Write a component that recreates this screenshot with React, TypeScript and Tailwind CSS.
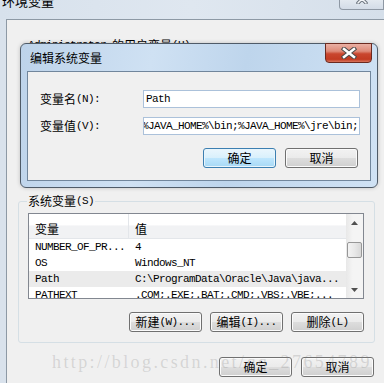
import React from "react";

const CJK = "font-['Noto_Sans_CJK_SC',sans-serif] text-[12px]";
const MONO = "font-['Liberation_Mono',monospace] text-[11px] tracking-[-0.6px]";

function Mix({ zh, en, pre }: { zh: string; en?: string; pre?: string }) {
  return (
    <span className="flex items-center whitespace-pre leading-[14px] text-black">
      {pre && <span className={MONO}>{pre}</span>}
      <span className={CJK}>{zh}</span>
      {en && <span className={MONO}>{en}</span>}
    </span>
  );
}

function Btn({ zh, en, focused }: { zh: string; en?: string; focused?: boolean }) {
  const base =
    "h-[20px] w-[73px] shrink-0 rounded-[3px] border flex items-center justify-center";
  const normal =
    "border-[#707070] bg-[linear-gradient(#f2f2f2_0%,#ebebeb_48%,#dddddd_52%,#cfcfcf_100%)] shadow-[inset_0_0_0_1px_#fbfbfb]";
  const focus =
    "border-[#3c7fb1] bg-[linear-gradient(#eaf6fd_0%,#d9f0fc_48%,#bee6fd_52%,#a7d9f5_100%)] shadow-[inset_0_0_0_1px_#e8f5fc]";
  return (
    <div className={`${base} ${focused ? focus : normal}`}>
      <Mix zh={zh} en={en} />
    </div>
  );
}

function Input({ children }: { children: React.ReactNode }) {
  return (
    <div className="h-[18px] w-[217px] border border-[#abc1da] bg-white overflow-hidden flex items-center pl-[2px]">
      <span className={`${MONO} leading-[14px] whitespace-nowrap text-black`}>{children}</span>
    </div>
  );
}

function Tri({ down }: { down?: boolean }) {
  return (
    <svg width="7" height="4" viewBox="0 0 7 4" className="block">
      <polygon points={down ? "0,0 7,0 3.5,4" : "0,4 3.5,0 7,4"} fill="#505050" />
    </svg>
  );
}

const rows: { name: string; value: string; sel?: boolean }[] = [
  { name: "NUMBER_OF_PR...", value: "4" },
  { name: "OS", value: "Windows_NT" },
  { name: "Path", value: "C:\\ProgramData\\Oracle\\Java\\java...", sel: true },
  { name: "PATHEXT", value: ".COM;.EXE;.BAT;.CMD;.VBS;.VBE;..." },
];

export default function App() {
  return (
    <div className="relative w-[384px] h-[383px] overflow-hidden bg-[#d9e2ec] flex flex-col leading-[14px]">
      {/* outer title bar */}
      <div className="relative h-[19px] shrink-0 bg-[linear-gradient(90deg,#d7e1ec,#dfe7f0_50%,#d5dfea)]">
        <div className={`${CJK} text-[13px] leading-[16px] -mt-[7px] ml-[2px] text-black`}>环境变量</div>
        <div className="absolute right-0 top-0 w-[45px] h-[10px] rounded-bl-[4px] border border-t-0 border-[#8e98a4] bg-[linear-gradient(#e3e9f0,#d3dce7)] overflow-hidden flex justify-center">
          <svg width="12" height="10" viewBox="0 0 12 10" className="-mt-[6px] block">
            <path d="M2 1 L10 9 M10 1 L2 9" stroke="#6a737d" strokeWidth="3.5" strokeLinecap="round" />
            <path d="M2 1 L10 9 M10 1 L2 9" stroke="#f4f6f8" strokeWidth="1.5" strokeLinecap="round" />
          </svg>
        </div>
      </div>

      <div className="flex flex-1 min-h-0">
        <div className="w-[6px] shrink-0 bg-[#d9e2ec]" />
        <div className="flex-1 border-l border-t border-[#8d99a5] bg-[#f0f0f0] flex flex-col">
          <div className="flex pl-[21px] pt-[18px]">
            <Mix pre="Administrator " zh="的用户变量" en="(U)" />
          </div>

          <fieldset className="ml-[11px] mt-[142px] w-[357px] rounded-[3px] border border-[#d5dfe5] px-0 pb-[10px]">
            <legend className="ml-[8px] px-[1px] bg-[#f0f0f0] leading-[14px]">
              <Mix zh="系统变量" en="(S)" />
            </legend>
            <div className="ml-[9px] mt-[5px] w-[336px] h-[86px] border border-[#828790] bg-white flex">
              <div className="flex-1 flex flex-col overflow-hidden">
                <div className="h-[25px] shrink-0 flex bg-[linear-gradient(#ffffff_0%,#ffffff_45%,#f1f2f4_50%,#f1f2f4_100%)] border-b border-[#e3e6ea]">
                  <div className="w-[100px] border-r border-[#e3e6ea] pl-[6px] pt-[8px] flex">
                    <span className={`${CJK} leading-[14px] text-black`}>变量</span>
                  </div>
                  <div className="flex-1 pl-[6px] pt-[8px] flex">
                    <span className={`${CJK} leading-[14px] text-black`}>值</span>
                  </div>
                </div>
                {rows.map((r) => (
                  <div key={r.name} className={`h-[16px] shrink-0 flex items-center ${r.sel ? "bg-[#ebebeb]" : ""}`}>
                    <div className={`w-[100px] pl-[6px] ${MONO} leading-[14px] whitespace-nowrap text-black`}>{r.name}</div>
                    <div className={`flex-1 pl-[6px] ${MONO} leading-[14px] whitespace-nowrap overflow-hidden text-black`}>{r.value}</div>
                  </div>
                ))}
              </div>
              <div className="w-[17px] shrink-0 bg-[linear-gradient(90deg,#e8e8e8,#f4f4f4_40%,#f4f4f4)] flex flex-col">
                <div className="h-[17px] flex items-center justify-center">
                  <Tri />
                </div>
                <div className="flex-1 px-[1px]">
                  <div className="mt-[11px] h-[16px] rounded-[2px] border border-[#979797] bg-[linear-gradient(90deg,#f3f3f3,#e8e8e8_50%,#d8d8d8)]" />
                </div>
                <div className="h-[17px] flex items-center justify-center">
                  <Tri down />
                </div>
              </div>
            </div>
            <div className="mt-[13px] flex justify-end gap-[8px] pr-[10px]">
              <Btn zh="新建" en="(W)..." />
              <Btn zh="编辑" en="(I)..." />
              <Btn zh="删除" en="(L)" />
            </div>
          </fieldset>

          <div className="mt-[14px] flex justify-end gap-[9px] pr-[10px]">
            <Btn zh="确定" />
            <Btn zh="取消" />
          </div>
        </div>
      </div>

      {/* edit dialog window */}
      <div className="absolute left-[20px] top-[43px] w-[358px] h-[145px] rounded-[6px] border border-[#4f5b68] bg-[linear-gradient(100deg,#bdd3ea_0%,#cfe1f3_35%,#bed5ec_60%,#d0e2f4_100%)] flex flex-col px-[6px] pb-[6px] shadow-[0_0_4px_rgba(0,0,0,0.2)]">
        <div className="relative h-[27px] shrink-0">
          <div className={`${CJK} leading-[16px] pt-[6px] pl-[3px] text-black`}>编辑系统变量</div>
          <div className="absolute right-[-1px] top-[-1px] w-[47px] h-[20px] rounded-b-[4px] border border-[#6b2a20] bg-[linear-gradient(#eab0a4_0%,#de8a78_40%,#c9462e_55%,#c23b22_85%,#d8765f_100%)] flex items-center justify-center">
            <svg width="16" height="12" viewBox="0 0 16 12" className="block">
              <path d="M3 2 L13 10 M13 2 L3 10" stroke="#4a4a4a" strokeWidth="4.5" strokeLinecap="square" />
              <path d="M3 2 L13 10 M13 2 L3 10" stroke="#ffffff" strokeWidth="2.5" strokeLinecap="square" />
            </svg>
          </div>
        </div>
        <div className="flex-1 border border-[#71869c] bg-[#f0f0f0] flex flex-col pt-[18px]">
          <div className="flex items-center">
            <div className="w-[115px] pl-[12px] flex">
              <Mix zh="变量名" en="(N):" />
            </div>
            <Input>Path</Input>
          </div>
          <div className="flex items-center mt-[9px]">
            <div className="w-[115px] pl-[12px] flex">
              <Mix zh="变量值" en="(V):" />
            </div>
            <Input>
              <span className="-ml-[4px]">%JAVA_HOME%\bin;%JAVA_HOME%\jre\bin;</span>
            </Input>
          </div>
          <div className="mt-[13px] flex justify-end gap-[9px] pr-[12px]">
            <Btn zh="确定" focused />
            <Btn zh="取消" />
          </div>
        </div>
      </div>

      {/* watermark */}
      <div className="pointer-events-none absolute left-[52px] top-[352px] font-['Liberation_Serif',serif] text-[18px] tracking-[2.4px] leading-[20px] whitespace-nowrap text-[rgba(128,128,128,0.25)]">
        http://blog.csdn.net/qq_27654789
      </div>
    </div>
  );
}
